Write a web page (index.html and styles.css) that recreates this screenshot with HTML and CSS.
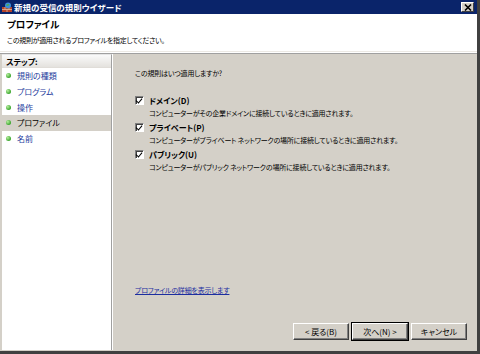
FILE: index.html
```html
<!DOCTYPE html>
<html lang="ja">
<head>
  <meta charset="UTF-8">
  <title>新規の受信の規則ウイザード</title>
  <link rel="stylesheet" href="styles.css">
</head>
<body>
  <div class="window">
    <!-- タイトルバー -->
    <div class="titlebar">
      <svg class="app-icon" width="10" height="10" viewBox="0 0 10 10">
        <rect x="0" y="5" width="10" height="5" fill="#b5432a"/>
        <path d="M0 7.5h10M3 5v2.5M7 5v2.5M5 7.5v2.5" stroke="#e8c9a8" stroke-width="0.7"/>
        <circle cx="6" cy="3.5" r="3" fill="#3f8fd8"/>
        <path d="M4.5 2.5q1.5-1 3 0q-1 1.5-3 1.5z" fill="#49b04a"/>
      </svg>
      <span class="title">新規の受信の規則ウイザード</span>
      <button class="close">
        <svg width="8" height="7" viewBox="0 0 8 7"><path d="M1 0.5l6 6M7 0.5l-6 6" stroke="#000" stroke-width="1.6"/></svg>
      </button>
    </div>

    <!-- ヘッダー -->
    <div class="header">
      <div class="header-title">プロファイル</div>
      <div class="header-desc">この規則が適用されるプロファイルを指定してください。</div>
    </div>

    <div class="body">
      <!-- ステップ -->
      <div class="steps">
        <div class="steps-head">ステップ:</div>
        <ul class="step-list">
          <li class="step"><span class="dot"></span>規則の種類</li>
          <li class="step"><span class="dot"></span>プログラム</li>
          <li class="step"><span class="dot"></span>操作</li>
          <li class="step current"><span class="dot"></span>プロファイル</li>
          <li class="step"><span class="dot"></span>名前</li>
        </ul>
      </div>

      <!-- 本文 -->
      <div class="main">
        <p class="question">この規則はいつ適用しますか?</p>
        <div class="option">
          <span class="check"></span>
          <div>
            <div class="opt-label">ドメイン(D)</div>
            <div class="opt-desc">コンピューターがその企業ドメインに接続しているときに適用されます。</div>
          </div>
        </div>
        <div class="option">
          <span class="check"></span>
          <div>
            <div class="opt-label">プライベート(P)</div>
            <div class="opt-desc">コンピューターがプライベート ネットワークの場所に接続しているときに適用されます。</div>
          </div>
        </div>
        <div class="option">
          <span class="check"></span>
          <div>
            <div class="opt-label">パブリック(U)</div>
            <div class="opt-desc">コンピューターがパブリック ネットワークの場所に接続しているときに適用されます。</div>
          </div>
        </div>
        <a class="more" href="#">プロファイルの詳細を表示します</a>
        <div class="buttons">
          <button class="btn">&lt; 戻る(B)</button>
          <button class="btn default">次へ(N) &gt;</button>
          <button class="btn">キャンセル</button>
        </div>
      </div>
    </div>
  </div>
</body>
</html>
```

FILE: styles.css
```css
/* ---- リセット ---- */
* { margin:0; padding:0; box-sizing:border-box; }
html, body { width:480px; height:354px; overflow:hidden; background:#d4d0c8; }
body {
  font-family: "Noto Sans CJK JP", "DejaVu Sans", sans-serif;
  font-size: 8px;
  font-feature-settings: "palt";
  color: #000;
}
.small { font-size:7px; letter-spacing:-0.2px; }

/* ---- ウィンドウ枠 ---- */
.window {
  width:480px; height:354px;
  display:flex; flex-direction:column;
  border-right:3px solid #404040;
  border-bottom:3px solid #404040;
  background:#d4d0c8;
}

/* ---- タイトルバー ---- */
.titlebar {
  height:14px; flex:none;
  display:flex; align-items:center;
  padding:0 3px 0 2px;
  background:#0a246a;
  color:#fff;
}
.app-icon { margin-right:2px; }
.title { font-weight:bold; font-size:8.5px; line-height:14px; }
.close {
  margin-left:auto;
  width:13px; height:10px;
  display:flex; align-items:center; justify-content:center;
  background:#d4d0c8;
  border:1px solid; border-color:#fff #404040 #404040 #fff;
}

/* ---- ヘッダー ---- */
.header {
  height:38px; flex:none;
  background:#fff;
  padding:2px 7px 0;
  border-bottom:1px solid #ece9e4;
  box-shadow:0 1px 0 #fff, 0 2px 0 #a0a0a0;
}
.header-title { font-weight:bold; font-size:9.5px; line-height:17px; }
.header-desc { line-height:14px; font-size:7px; letter-spacing:-0.3px; }

/* ---- 本体 ---- */
.body { flex:1; display:flex; padding:2px 0 1px 2px; }

/* ---- ステップ ---- */
.steps {
  width:110px;
  background:#fff;
  border-right:1px solid #a0a0a0;
  box-shadow:1px 0 0 #fff;
  border-top:1px solid #e6e6e6;
}
.steps-head {
  height:13px;
  padding-left:4px;
  font-weight:bold; line-height:13px;
  background:linear-gradient(#fafafa, #e4e2de);
  border-bottom:1px solid #e0ddd8;
}
.step-list { list-style:none; }
.step {
  height:15.7px;
  display:flex; align-items:center;
  padding-left:4px;
  color:#1c3a9c;
}
.step.current { background:#d4d0c8; color:#000; }
.dot {
  width:5px; height:5px; margin-right:6px;
  border-radius:50%;
  background:radial-gradient(circle at 35% 35%, #b8f0a0, #3aa52c 70%);
}

/* ---- 本文 ---- */
.main { flex:1; display:flex; flex-direction:column; padding:13px 10px 10px 23px; }
.question { line-height:12px; margin-bottom:16px; font-size:7px; letter-spacing:-0.2px; }
.option { display:flex; margin-bottom:3px; }
.check {
  width:9px; height:9px; flex:none;
  margin:1px 5px 0 0;
  background:#fff;
  border:1px solid; border-color:#808080 #fff #fff #808080;
  box-shadow:inset 1px 1px 0 #404040;
  position:relative;
}
.check::after {
  content:""; position:absolute; left:1px; top:0;
  width:3px; height:5px;
  border:solid #000; border-width:0 1.5px 1.5px 0;
  transform:rotate(40deg);
}
.opt-label { font-weight:bold; line-height:12px; }
.opt-desc { line-height:12px; font-size:7px; letter-spacing:-0.2px; }
.more {
  margin-top:auto;
  color:#1c2ea0;
  line-height:12px;
  margin-bottom:27px;
  font-size:7px; letter-spacing:-0.2px;
}
.buttons { display:flex; justify-content:flex-end; gap:3px; }
.btn {
  width:56px; height:17px;
  font:inherit;
  font-feature-settings:"palt";
  background:#d4d0c8;
  border:1px solid; border-color:#fff #404040 #404040 #fff;
  box-shadow:inset -1px -1px 0 #808080;
}
.btn.default { outline:1px solid #000; }
```
